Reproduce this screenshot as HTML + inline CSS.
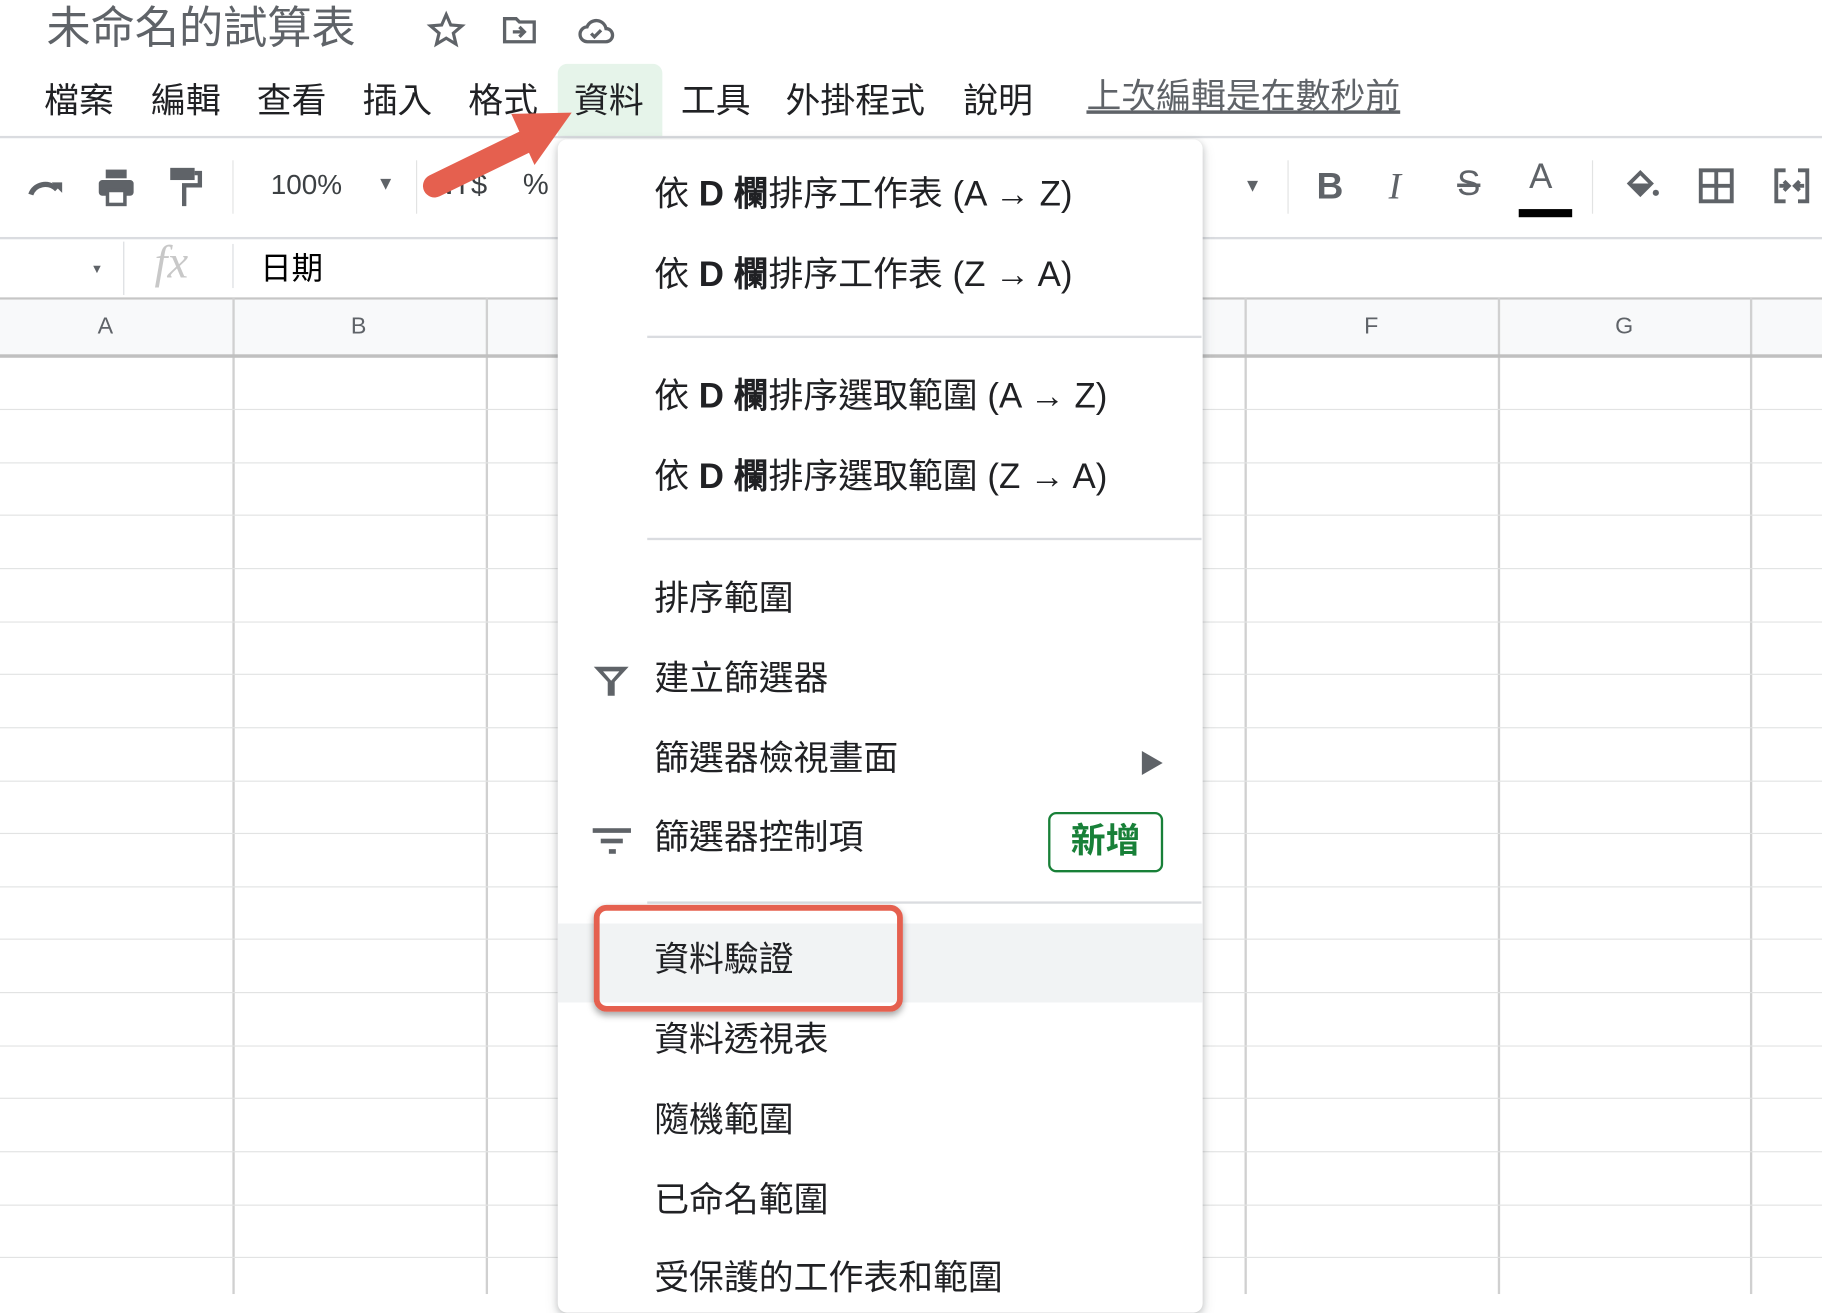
<!DOCTYPE html>
<html><head><meta charset="utf-8"><style>
html,body{margin:0;padding:0;width:1822px;height:1294px;overflow:hidden;background:#fff}
#s{position:absolute;left:0;top:0;width:1568px;height:1114px;transform:scale(1.16199,1.1616);transform-origin:0 0;font-family:"Liberation Sans","Noto Sans CJK TC",sans-serif;color:#202124}
.a{position:absolute;white-space:nowrap}
.hl{position:absolute;left:0;width:1568px;height:1px;background:#e2e3e3}
.vl{position:absolute;width:1px;background:#e2e3e3}
.mi{position:absolute;left:563px;font-size:30px;line-height:40px;color:#202124}
.mi b{font-family:"Liberation Sans",sans-serif}
.sep{position:absolute;left:557px;width:477px;height:2px;background:#dadce0}
.m{position:absolute;top:68px;font-size:30px;line-height:40px}
</style></head><body><div id="s">
<div class="a" style="left:40px;top:2px;font-size:38px;color:#5f6368;line-height:46px">未命名的試算表</div>
<svg class="a" style="left:366px;top:8px" width="36" height="36" viewBox="0 0 24 24"><path d="M12 3l2.6 6 6.4.5-4.9 4.2 1.5 6.3L12 16.6 6.4 20l1.5-6.3L3 9.5l6.4-.5z" fill="none" stroke="#5f6368" stroke-width="1.8"/></svg>
<svg class="a" style="left:429px;top:9px" width="36" height="34" viewBox="0 0 24 24"><path d="M3 5h7l2 2h9v12H3z" fill="none" stroke="#5f6368" stroke-width="2"/><path d="M8 13h7M12 10l3 3-3 3" fill="none" stroke="#5f6368" stroke-width="2"/></svg>
<svg class="a" style="left:494px;top:9px" width="38" height="34" viewBox="0 0 24 24"><path d="M7 19h11a4 4 0 0 0 0-8 6 6 0 0 0-11.5-1A4.5 4.5 0 0 0 7 19z" fill="none" stroke="#5f6368" stroke-width="2"/><path d="M9 14l2 2 4-4" fill="none" stroke="#5f6368" stroke-width="2"/></svg>

<div class="a" style="left:480px;top:55px;width:90px;height:64px;background:#e6f4ea;border-radius:8px 8px 0 0"></div>
<div class="m" style="left:38px">檔案</div><div class="m" style="left:130px">編輯</div><div class="m" style="left:221px">查看</div><div class="m" style="left:312px">插入</div><div class="m" style="left:403px">格式</div><div class="m" style="left:494px">資料</div><div class="m" style="left:586px">工具</div><div class="m" style="left:676px">外掛程式</div><div class="m" style="left:829px">說明</div>
<div class="m" style="left:935px;top:64px;color:#5f6368;text-decoration:underline">上次編輯是在數秒前</div>
<div class="hl" style="top:117px;height:2px;background:#dadce0"></div>

<!-- toolbar -->
<svg class="a" style="left:22px;top:145px" width="36" height="30" viewBox="0 0 24 20"><path d="M3 15c2-6 10-8 15-3" fill="none" stroke="#5f6368" stroke-width="3"/><path d="M15 8h6v6z" fill="#5f6368"/></svg>
<svg class="a" style="left:82px;top:143px" width="36" height="36" viewBox="0 0 24 24"><rect x="6" y="2" width="12" height="5" fill="#5f6368"/><rect x="2" y="8" width="20" height="9" rx="2" fill="#5f6368"/><rect x="7" y="14" width="10" height="8" fill="#fff" stroke="#5f6368" stroke-width="2"/></svg>
<svg class="a" style="left:144px;top:143px" width="32" height="36" viewBox="0 0 20 24"><rect x="1" y="1" width="14" height="7" fill="#5f6368"/><path d="M15 4h3v7h-9v12" fill="none" stroke="#5f6368" stroke-width="2.5"/></svg>
<div class="vl" style="left:200px;top:138px;height:46px"></div>
<div class="a" style="left:233px;top:146px;font-size:24px;color:#3c4043">100%</div>
<div class="a" style="left:324px;top:150px;font-size:16px;color:#5f6368">▼</div>
<div class="vl" style="left:358px;top:138px;height:46px"></div>
<div class="a" style="left:372px;top:145px;font-size:25px;color:#3c4043">NT$</div>
<div class="a" style="left:450px;top:145px;font-size:25px;color:#3c4043">%</div>
<div class="a" style="left:1070px;top:152px;font-size:16px;color:#5f6368">▼</div>
<div class="vl" style="left:1108px;top:138px;height:46px"></div>
<div class="a" style="left:1133px;top:142px;font-size:32px;font-weight:bold;color:#5f6368">B</div>
<div class="a" style="left:1195px;top:142px;font-size:32px;font-style:italic;font-family:'Liberation Serif',serif;color:#5f6368">I</div>
<div class="a" style="left:1254px;top:142px;font-size:30px;color:#5f6368;text-decoration:line-through">S</div>
<div class="a" style="left:1316px;top:136px;font-size:30px;color:#5f6368">A</div>
<div class="a" style="left:1307px;top:180px;width:46px;height:7px;background:#000"></div>
<div class="vl" style="left:1370px;top:138px;height:46px"></div>
<svg class="a" style="left:1396px;top:142px" width="34" height="32" viewBox="0 0 24 24"><path d="M4 12l7-7 7 7-7 7z" fill="none" stroke="#5f6368" stroke-width="2.5"/><path d="M4 12h14l-7 7z" fill="#5f6368"/><circle cx="21" cy="18" r="2" fill="#5f6368"/></svg>
<svg class="a" style="left:1461px;top:144px" width="32" height="32" viewBox="0 0 24 24"><path d="M2 2h20v20H2zM12 2v20M2 12h20" fill="none" stroke="#5f6368" stroke-width="2.5"/></svg>
<svg class="a" style="left:1524px;top:144px" width="36" height="32" viewBox="0 0 24 24"><path d="M8 2H2v20h6M16 2h6v20h-6M4 12h5M20 12h-5M7 9l3 3-3 3M17 9l-3 3 3 3" fill="none" stroke="#5f6368" stroke-width="2.5"/></svg>
<div class="hl" style="top:204px;height:2px;background:#dadce0"></div>

<!-- formula bar -->
<div class="a" style="left:78px;top:226px;font-size:11px;color:#5f6368">▼</div>
<div class="vl" style="left:106px;top:208px;height:46px;background:#dadce0"></div>
<div class="a" style="left:133px;top:202px;font-size:40px;font-style:italic;font-family:'Liberation Serif',serif;color:#c8c8c8">fx</div>
<div class="vl" style="left:200px;top:210px;height:38px;background:#dadce0"></div>
<div class="a" style="left:224px;top:209px;font-size:27px;color:#000">日期</div>
<div class="hl" style="top:256px;height:2px;background:#c6c6c6"></div>
<div class="a" style="left:0;top:258px;width:1568px;height:47px;background:#f8f9fa"></div>
<div class="a" style="left:84px;top:270px;font-size:20px;color:#5f6368">A</div>
<div class="a" style="left:302px;top:270px;font-size:20px;color:#5f6368">B</div>
<div class="a" style="left:1174px;top:270px;font-size:20px;color:#5f6368">F</div>
<div class="a" style="left:1390px;top:270px;font-size:20px;color:#5f6368">G</div>
<div class="vl" style="left:200px;top:256px;height:858px;background:#d0d0d0;width:2px"></div>
<div class="vl" style="left:418px;top:256px;height:858px;background:#d0d0d0;width:2px"></div>
<div class="vl" style="left:1071px;top:256px;height:858px;background:#d0d0d0;width:2px"></div>
<div class="vl" style="left:1289px;top:256px;height:858px;background:#d0d0d0;width:2px"></div>
<div class="vl" style="left:1506px;top:256px;height:858px;background:#d0d0d0;width:2px"></div>
<div class="hl" style="top:305px;height:3px;background:#c0c0c0"></div>
<div class="hl" style="top:352px"></div><div class="hl" style="top:398px"></div><div class="hl" style="top:443px"></div><div class="hl" style="top:489px"></div><div class="hl" style="top:535px"></div><div class="hl" style="top:580px"></div><div class="hl" style="top:626px"></div><div class="hl" style="top:672px"></div><div class="hl" style="top:717px"></div><div class="hl" style="top:763px"></div><div class="hl" style="top:808px"></div><div class="hl" style="top:854px"></div><div class="hl" style="top:900px"></div><div class="hl" style="top:945px"></div><div class="hl" style="top:991px"></div><div class="hl" style="top:1037px"></div><div class="hl" style="top:1082px"></div>

<!-- menu -->
<div class="a" style="left:480px;top:120px;width:555px;height:1010px;background:#fff;border-radius:8px;box-shadow:0 2px 6px rgba(60,64,67,.25),0 4px 12px rgba(60,64,67,.12)"></div>
<div class="mi" style="top:148px">依 <b>D</b> <b>欄</b>排序工作表 (A → Z)</div>
<div class="mi" style="top:217px">依 <b>D</b> <b>欄</b>排序工作表 (Z → A)</div>
<div class="sep" style="top:289px"></div>
<div class="mi" style="top:322px">依 <b>D</b> <b>欄</b>排序選取範圍 (A → Z)</div>
<div class="mi" style="top:391px">依 <b>D</b> <b>欄</b>排序選取範圍 (Z → A)</div>
<div class="sep" style="top:463px"></div>
<div class="mi" style="top:496px">排序範圍</div>
<svg class="a" style="left:510px;top:572px" width="32" height="28" viewBox="0 0 32 28"><path d="M1 2h30L19 15v12h-6V15z" fill="#5f6368"/><path d="M9 6h14l-7 8z" fill="#fff"/></svg>
<div class="mi" style="top:565px">建立篩選器</div>
<div class="mi" style="top:634px">篩選器檢視畫面</div>
<div class="a" style="left:980px;top:640px;font-size:22px;color:#5f6368">▶</div>
<svg class="a" style="left:510px;top:712px" width="34" height="24" viewBox="0 0 34 24"><rect x="0" y="1" width="33" height="4" fill="#5f6368"/><rect x="7" y="10" width="19" height="4" fill="#5f6368"/><rect x="14" y="19" width="6" height="4" fill="#5f6368"/></svg>
<div class="mi" style="top:702px">篩選器控制項</div>
<div class="a" style="left:902px;top:699px;width:95px;height:48px;border:2px solid #188038;border-radius:7px;color:#188038;font-size:30px;font-weight:bold;text-align:center;line-height:48px">新增</div>
<div class="sep" style="top:776px"></div>
<div class="a" style="left:480px;top:795px;width:555px;height:68px;background:#f1f3f4"></div>
<div class="mi" style="top:807px">資料驗證</div>
<div class="mi" style="top:876px">資料透視表</div>
<div class="mi" style="top:945px">隨機範圍</div>
<div class="mi" style="top:1014px">已命名範圍</div>
<div class="mi" style="top:1081px">受保護的工作表和範圍</div>
<div class="a" style="left:511px;top:779px;width:256px;height:82px;border:5px solid #e5604f;border-radius:11px;box-shadow:0 3px 6px rgba(0,0,0,.35)"></div>
<!-- arrow -->
<svg class="a" style="left:360px;top:90px" width="140" height="90" viewBox="0 0 140 90"><path d="M14 70 L96 30" stroke="#e5604f" stroke-width="20" stroke-linecap="round"/><path d="M80 8 L132 7 L100 52 Z" fill="#e5604f"/></svg>
</div></body></html>
